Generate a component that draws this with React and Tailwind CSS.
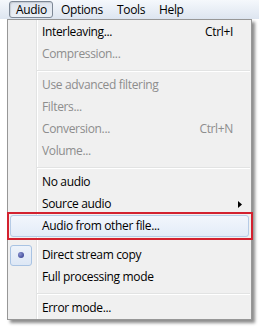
const font = { fontFamily: '"Open Sans", "Noto Sans", sans-serif' };

const Row = ({ label, shortcut, disabled, arrow, radio, active }) => (
  <div
    className={`relative flex h-[22px] items-center ${
      active
        ? "mx-[2px] rounded-[3px] border border-[#b6cbe6] bg-[linear-gradient(#f2f6fc,#e3ecf8)]"
        : ""
    }`}
  >
    <div className={`flex ${active ? "w-[31px]" : "w-[34px]"} shrink-0 items-center justify-start`}>
      {radio && (
        <div className="ml-[2px] flex h-[21px] w-[22px] items-center justify-center rounded-[3px] border border-[#a9c3e3] bg-[linear-gradient(#eef3fa,#dde7f5)]">
          <div className="h-[6px] w-[6px] rounded-full bg-[radial-gradient(circle_at_35%_35%,#8a93d0,#2a3488)]" />
        </div>
      )}
    </div>
    <span className={`flex-1 ${disabled ? "text-[#8d8d8d]" : "text-black"}`}>{label}</span>
    {shortcut && (
      <span className={`mr-[18px] ${disabled ? "text-[#8d8d8d]" : "text-black"}`}>{shortcut}</span>
    )}
    {arrow && (
      <svg width="4" height="7" viewBox="0 0 4 7" className="mr-[9px]">
        <path d="M0 0 L4 3.5 L0 7 Z" fill="#000" />
      </svg>
    )}
  </div>
);

const Separator = () => (
  <div className="ml-[29px] mr-[1px] flex h-[9px] flex-col justify-start pt-[5px]">
    <div className="h-px bg-[#e2e3e3]" />
    <div className="h-px bg-white" />
  </div>
);

export default function App() {
  return (
    <div
      className="relative h-[327px] w-[259px] overflow-hidden bg-white text-[12px] leading-none tracking-[-0.35px]"
      style={font}
    >
      {/* menu bar */}
      <div className="flex h-[19px] items-center bg-[linear-gradient(#f5f8fc,#dde5f0)] pl-[9px] text-black">
        <div className="flex h-[17px] w-[44px] items-center rounded-[3px] border border-[#7d8896] bg-[linear-gradient(#dfe5ee,#eaeff5)] pl-[6px] shadow-[inset_1px_1px_1px_rgba(0,0,0,0.12)]">
          Audio
        </div>
        <div className="w-[56px] pl-[8px]">Options</div>
        <div className="w-[43px] pl-[8px]">Tools</div>
        <div className="pl-[7px]">Help</div>
      </div>

      {/* dropdown */}
      <div className="ml-[7px] w-[245px] border border-[#979797] bg-[#f0f0f0] shadow-[3px_3px_3px_rgba(0,0,0,0.45)]">
        <div className="bg-[linear-gradient(to_right,#f0f0f0_28px,#e2e3e3_28px,#e2e3e3_29px,#ffffff_29px,#ffffff_30px,#f0f0f0_30px)] pt-[1px]">
          <Row label="Interleaving..." shortcut="Ctrl+I" />
          <Row label="Compression..." disabled />
          <Separator />
          <Row label="Use advanced filtering" disabled />
          <Row label="Filters..." disabled />
          <Row label="Conversion..." shortcut="Ctrl+N" disabled />
          <Row label="Volume..." disabled />
          <Separator />
          <Row label="No audio" />
          <Row label="Source audio" arrow />
          <Row label="Audio from other file..." active />
          <div className="h-[7px]" />
          <Row label="Direct stream copy" radio />
          <Row label="Full processing mode" />
          <Separator />
          <Row label="Error mode..." />
        </div>
      </div>

      {/* highlight annotation */}
      <div className="absolute left-[7px] top-[212px] h-[28px] w-[246px] border-2 border-[#d3212f]" />
    </div>
  );
}
